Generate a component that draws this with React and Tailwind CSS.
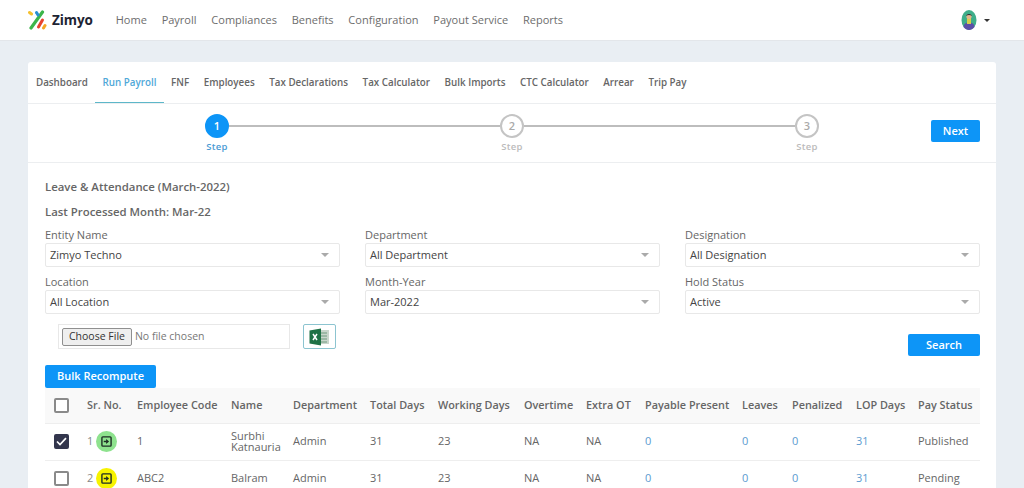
import React from 'react';

const navItems = ['Home', 'Payroll', 'Compliances', 'Benefits', 'Configuration', 'Payout Service', 'Reports'];
const tabs = ['Dashboard', 'Run Payroll', 'FNF', 'Employees', 'Tax Declarations', 'Tax Calculator', 'Bulk Imports', 'CTC Calculator', 'Arrear', 'Trip Pay'];
const columns = [
  ['Sr. No.', 'w-[50px]'],
  ['Employee Code', 'w-[94px]'],
  ['Name', 'w-[62px]'],
  ['Department', 'w-[77px]'],
  ['Total Days', 'w-[68px]'],
  ['Working Days', 'w-[86px]'],
  ['Overtime', 'w-[62px]'],
  ['Extra OT', 'w-[59px]'],
  ['Payable Present', 'w-[97px]'],
  ['Leaves', 'w-[50px]'],
  ['Penalized', 'w-[64px]'],
  ['LOP Days', 'w-[62px]'],
  ['Pay Status', 'w-[70px]'],
];
const rows = [
  { sr: 1, code: '1', name: 'Surbhi Katnauria', status: 'Published', checked: true, badge: 'bg-[#8ee28e]', height: 'h-[37px]' },
  { sr: 2, code: 'ABC2', name: 'Balram', status: 'Pending', checked: false, badge: 'bg-[#f7f300]', height: 'h-[37px]' },
];

const Logo = () => (
  <svg width="19" height="20" viewBox="0 0 19 20" fill="none" strokeLinecap="round">
    <path d="M1.5 2.5 L3.5 4" stroke="#f5c02e" strokeWidth="3" />
    <path d="M14.5 2 L3 18" stroke="#3cb54a" strokeWidth="3.2" />
    <path d="M8.5 2.5 L10 5" stroke="#2b8fd0" strokeWidth="3" />
    <path d="M14.5 10 L10.5 17" stroke="#e8432e" strokeWidth="3" />
    <path d="M17 15.5 L15.5 18" stroke="#f5a623" strokeWidth="3" />
  </svg>
);

const Avatar = () => (
  <svg width="16" height="20" viewBox="0 0 16 20">
    <ellipse cx="8" cy="10" rx="7.5" ry="10" fill="#3fae8a" />
    <path d="M2.5 17 C3 13.5 5 12.5 8 12.5 C11 12.5 13 13.5 13.5 17 C12 19 10 20 8 20 C6 20 4 19 2.5 17Z" fill="#5b4fa8" />
    <rect x="6" y="8" width="4" height="6" fill="#d8cf4a" />
    <circle cx="8" cy="6.5" r="2.6" fill="#e3b58c" />
    <path d="M5.2 6 C5.2 3.2 10.8 3.2 10.8 6 C9.5 4.8 6.5 4.8 5.2 6Z" fill="#1f2430" />
  </svg>
);

const ExcelIcon = () => (
  <svg width="21" height="18" viewBox="0 0 21 18">
    <rect x="9" y="2" width="11" height="14" fill="#c9d6cc" />
    <path d="M11 5h7M11 8h7M11 11h7M11 14h7" stroke="#6f9a7e" strokeWidth="1" />
    <path d="M0.5 2.5 L12 0.5 V17.5 L0.5 15.5Z" fill="#1e7145" />
    <path d="M4 6 L8 12 M8 6 L4 12" stroke="#fff" strokeWidth="1.5" />
  </svg>
);

const RowIcon = () => (
  <svg width="11" height="11" viewBox="0 0 12 12" fill="none">
    <rect x="1" y="1" width="10" height="10" rx="1" stroke="#1d2b24" strokeWidth="1.5" />
    <path d="M3 6h3" stroke="#1d2b24" strokeWidth="1.6" />
    <path d="M5.6 3.4 L8.8 6 L5.6 8.6Z" fill="#1d2b24" />
  </svg>
);

const Checkbox = ({ checked }) => (
  <span className={`flex h-[15px] w-[15px] items-center justify-center rounded-[2px] border-2 ${checked ? 'border-[#33364d] bg-[#33364d]' : 'border-[#8a8a8a] bg-white'}`}>
    {checked && (
      <svg width="11" height="9" viewBox="0 0 11 9" fill="none">
        <path d="M1 4.5 L4 7.5 L10 1.2" stroke="#fff" strokeWidth="1.7" />
      </svg>
    )}
  </span>
);

const SelectBox = ({ label, value }) => (
  <div>
    <label className="block text-[11px] leading-[17px] text-[#666]">{label}</label>
    <div className="flex h-[24px] items-center justify-between rounded-[2px] border border-[#e8e8e8] bg-white pl-[4px] pr-[10px] text-[11px] text-[#444]">
      <span>{value}</span>
      <span className="h-0 w-0 border-x-[4px] border-t-[4px] border-x-transparent border-t-[#aaa]" />
    </div>
  </div>
);

const Step = ({ n, active }) => (
  <div className="flex w-6 flex-col items-center">
    <span className={`flex h-6 w-6 shrink-0 items-center justify-center rounded-full border-2 text-[11px] font-semibold ${active ? 'border-[#0d95f7] bg-[#0d95f7] text-white' : 'border-[#c4c4c4] bg-white text-[#aaa]'}`}>{n}</span>
    <span className={`mt-[2px] text-[9.5px] font-semibold leading-[14px] tracking-[0.3px] ${active ? 'text-[#4a9bd4]' : 'text-[#bbb]'}`}>Step</span>
  </div>
);

export default function App() {
  return (
    <div className="h-[488px] overflow-hidden bg-[#e9eef3] font-['Open_Sans','Noto_Sans',sans-serif]">
      <header className="flex h-[41px] items-center border-b border-[#e3e6ea] bg-white pl-[28px] pr-[34px]">
        <Logo />
        <span className="ml-[5px] text-[13.5px] font-bold tracking-[-0.1px] text-[#1d2433]">Zimyo</span>
        <nav className="ml-[23px] flex gap-[14.8px] text-[11px] text-[#6d6d6d]">
          {navItems.map((item) => <span key={item}>{item}</span>)}
        </nav>
        <div className="ml-auto flex items-center gap-[7px]">
          <Avatar />
          <span className="h-0 w-0 border-x-[3.5px] border-t-[3.5px] border-x-transparent border-t-[#333]" />
        </div>
      </header>

      <main className="mx-[28px] mt-[21px] rounded-[3px] bg-white">
        <div className="flex h-[42px] border-b border-[#eceef0] pl-[0.7px] text-[9.8px] font-semibold text-[#666]">
          {tabs.map((tab) => (
            <span key={tab} className={`flex items-center px-[7.3px] pt-[2px] ${tab === 'Run Payroll' ? 'border-b border-[#5db7c9] text-[#4fa8d8]' : ''}`}>{tab}</span>
          ))}
        </div>

        <div className="flex h-[59px] border-b border-[#eceef0] pl-[177px] pr-[16px] pt-[10px]">
          <Step n={1} active />
          <div className="mt-[11px] h-[2px] w-[271px] bg-[#bdbdbd]" />
          <Step n={2} />
          <div className="mt-[11px] h-[2px] w-[271px] bg-[#bdbdbd]" />
          <Step n={3} />
          <button className="ml-auto mt-[6px] h-[22px] w-[49px] rounded-[2px] bg-[#0d95f7] text-[11px] font-semibold text-white">Next</button>
        </div>

        <div className="pl-[17px] pr-[16px]">
          <h2 className="mt-[15px] text-[11.4px] font-semibold leading-[17px] text-[#666]">Leave &amp; Attendance (March-2022)</h2>
          <h3 className="mt-[8px] text-[11.4px] font-semibold leading-[17px] text-[#666]">Last Processed Month: Mar-22</h3>

          <div className="mt-[6px] grid grid-cols-3 gap-x-[25px] gap-y-[6px]">
            <SelectBox label="Entity Name" value="Zimyo Techno" />
            <SelectBox label="Department" value="All Department" />
            <SelectBox label="Designation" value="All Designation" />
            <SelectBox label="Location" value="All Location" />
            <SelectBox label="Month-Year" value="Mar-2022" />
            <SelectBox label="Hold Status" value="Active" />
          </div>

          <div className="mt-[10px] flex items-start pl-[13px]">
            <div className="flex h-[25px] w-[232px] items-center border border-[#e8e8e8] px-[3px] text-[10.5px] text-[#777]">
              <span className="rounded-[2px] border border-[#8f8f8f] bg-[#efefef] px-[6px] pb-[1px] leading-[15px] text-[#333]">Choose File</span>
              <span className="ml-[3px]">No file chosen</span>
            </div>
            <button className="ml-[13px] flex h-[25px] w-[33px] items-center justify-center rounded-[2px] border border-[#8cc4d0] bg-white"><ExcelIcon /></button>
            <button className="ml-auto mt-[10px] h-[22px] w-[72px] rounded-[2px] bg-[#0d95f7] text-[11px] font-semibold text-white">Search</button>
          </div>

          <button className="mt-[9px] block h-[23px] w-[111px] rounded-[2px] bg-[#0d95f7] text-[11px] font-semibold text-white">Bulk Recompute</button>

          <table className="w-[935px] table-fixed border-collapse text-[11px] text-[#666]">
            <colgroup>
              <col className="w-[34px]" />
              {columns.map(([name, width]) => <col key={name} className={width} />)}
            </colgroup>
            <thead>
              <tr className="h-[35px] border-b border-[#eeeeee] bg-[#f9f9f9] text-[10.85px]">
                <th className="pl-[9px]"><Checkbox /></th>
                {columns.map(([name]) => (
                  <th key={name} className="whitespace-nowrap pl-[8px] text-left font-semibold text-[#666]">{name}</th>
                ))}
              </tr>
            </thead>
            <tbody>
              {rows.map((row) => (
                <tr key={row.sr} className={`${row.height} border-b border-[#eeeeee]`}>
                  <td className="pl-[9px]"><Checkbox checked={row.checked} /></td>
                  <td className="pl-[8px]">
                    <span className="flex items-center gap-[3px] text-[#888]">
                      {row.sr}
                      <span className={`flex h-[21px] w-[21px] items-center justify-center rounded-full ${row.badge}`}><RowIcon /></span>
                    </span>
                  </td>
                  <td className="pl-[8px]">{row.code}</td>
                  <td className="pl-[8px] pb-[2px] leading-[11px]">{row.name}</td>
                  <td className="pl-[8px]">Admin</td>
                  <td className="pl-[8px]">31</td>
                  <td className="pl-[8px]">23</td>
                  <td className="pl-[8px]">NA</td>
                  <td className="pl-[8px]">NA</td>
                  <td className="pl-[8px] text-[#5b9bd0]">0</td>
                  <td className="pl-[8px] text-[#5b9bd0]">0</td>
                  <td className="pl-[8px] text-[#5b9bd0]">0</td>
                  <td className="pl-[8px] text-[#5b9bd0]">31</td>
                  <td className="pl-[8px]">{row.status}</td>
                </tr>
              ))}
            </tbody>
          </table>
        </div>
      </main>
    </div>
  );
}
